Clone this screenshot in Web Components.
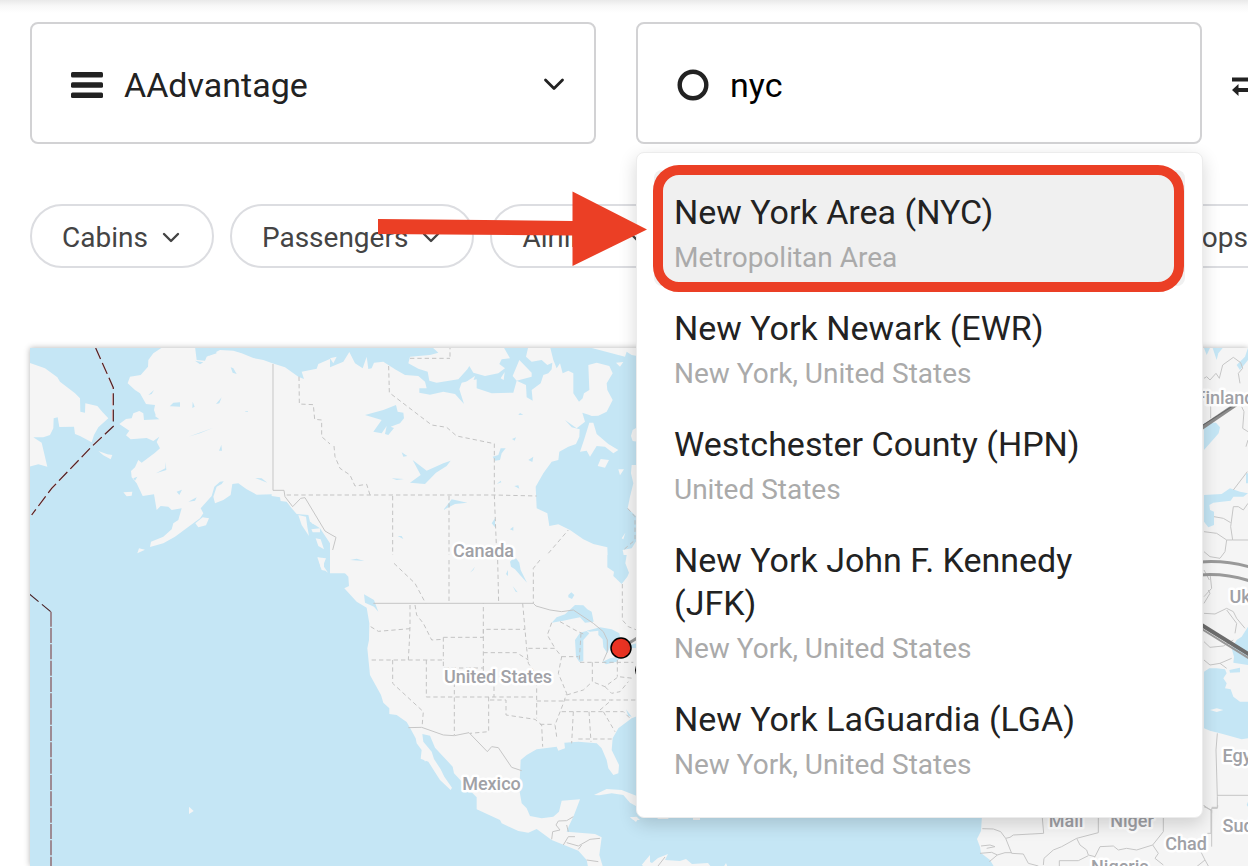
<!DOCTYPE html>
<html lang="en">
<head>
<meta charset="utf-8">
<meta name="viewport" content="width=device-width, initial-scale=1">
<title>Award flight search</title>
<style>
  html, body { height: 100%; margin: 0; }
  body { font-family: Roboto, "Liberation Sans", sans-serif; color: #222; background: #fff; overflow: hidden; }
</style>
</head>
<body>
<flight-search></flight-search>

<script>
const define = (name, html, setup) => {
  const tpl = document.createElement('template');
  tpl.innerHTML = html;
  customElements.define(name, class extends HTMLElement {
    constructor() {
      super();
      this.attachShadow({ mode: 'open' }).append(tpl.content.cloneNode(true));
      if (setup) setup(this, this.shadowRoot);
    }
  });
};

/* Bordered box with a leading icon, a control and an optional trailing icon */
define('search-field', `
  <style>
    :host { display: flex; align-items: center; gap: 19px; box-sizing: border-box; height: 122px; padding: 3px 29px 0 39px;
            border: 2px solid #d2d2d4; border-radius: 8px; background: #fff; position: relative; }
    ::slotted([slot=icon]), ::slotted([slot=end]) { flex: none; pointer-events: none; }
  </style>
  <slot name="icon"></slot><slot></slot><slot name="end"></slot>`);

define('filter-chip', `
  <style>
    :host { display: block; flex: none; }
    button { display: flex; align-items: center; gap: 10px; height: 64px; box-sizing: border-box; padding: 4px 32px 0 30px;
             border: 2px solid #dcdde1; border-radius: 32px; background: #fff; font: 28px/36px Roboto, "Liberation Sans", sans-serif; color: #444; }
    svg { margin-left: 4px; }
  </style>
  <button type="button"><slot></slot>
    <svg width="18" height="12" viewBox="0 0 18 12" fill="none" stroke="#444" stroke-width="2.4" stroke-linecap="round" stroke-linejoin="round" aria-hidden="true"><path d="M2 2l7 7 7-7"/></svg>
  </button>`);

define('place-option', `
  <style>
    :host { display: block; position: relative; padding: 21px 22px 4px 20px; border-radius: 8px; }
    :host([aria-selected=true]) { background: #f0f0f0; }
    .name { font-size: 34px; line-height: 43px; color: #222; }
    .area { font-size: 28px; line-height: 48px; color: #aaa; }
  </style>
  <div class="name"><slot></slot></div>
  <div class="area"><slot name="area"></slot></div>
  <slot name="note"></slot>`);

define('place-menu', `
  <style>
    :host { display: block; position: absolute; z-index: 5; top: calc(100% + 10px); left: -2px; right: -3px; box-sizing: border-box;
            padding: 17px 17px 24px; border: 1px solid #ececec; border-radius: 8px; background: #fff;
            box-shadow: 0 6px 18px rgba(0,0,0,.16); }
  </style>
  <slot></slot>`);

/* Red frame and arrow laid over the option that holds it */
define('red-callout', `
  <style>
    :host { position: absolute; inset: -5px 1px -6px -1px; box-sizing: border-box; border: 10px solid #eb3f25; border-radius: 26px; pointer-events: none; }
    svg { position: absolute; left: -285px; top: 16px; }
  </style>
  <svg width="270" height="76" viewBox="0 0 270 76" aria-hidden="true"><path fill="#eb3f25" d="M0 28L194.500 30V0.500L269 38.500L194.500 75V44.500L0 43Z"/></svg>`);

define('route-map', `
  <style>
    :host { display: block; overflow: hidden; background: #c5e6f5; box-shadow: 0 0 6px rgba(0,0,0,.3); }
    svg { display: block; width: 100%; height: 100%; }
    .land { fill: #f5f5f5; } .water { fill: #c5e6f5; }
    .prov { fill: none; stroke: #c3c3c3; stroke-width: 3; stroke-dasharray: 13 9; }
    .line { fill: none; stroke: #c6c6c6; stroke-width: 3; }
    .date { fill: none; stroke: #f4c9c9; stroke-width: 5; } .date2 { fill: none; stroke: #4a2226; stroke-width: 3.500; }
    .date, .date2 { stroke-dasharray: 36 13; }
    text { font: 500 18px Roboto, "Liberation Sans", sans-serif; fill: #a0a1a6; stroke: #fff; stroke-width: 5px; stroke-linejoin: round; paint-order: stroke; text-anchor: middle; }
  </style>
  <svg viewBox="30 348 1218 518" preserveAspectRatio="xMinYMin slice" role="img" aria-label="Route map">
    <!-- Alaska, Siberia and the north Pacific coast -->
    <g transform="translate(20 340) scale(.33333)">
      <path class="land" d="M430 20L400 40 385 60 384 80 362 105 330 110 323 130 345 150 360 160 378 192 405 195 402 210 408 228 418 222 440 208 460 188 480 187V200L440 198 418 215 405 228 418 238 372 240 370 220 358 213 340 220 335 235 318 237 298 252 328 272 318 286 332 298 380 294 400 303 418 290 410 306 420 325 405 338 365 368 355 360 345 382 333 393 335 412 350 430 368 468 402 463 410 510 422 498 445 500 455 510 485 505 475 540 460 550 455 568 430 590 393 605 390 621 430 610 465 590 540 535 550 520 542 505 575 468 583 440 600 425 611 424 605 432 590 440 580 470 585 490 610 480 632 465 637 432 655 430 680 448 710 464 755 463V468L780 472 782 483 800 485 815 505 830 522 865 525 870 545 890 565 905 590 925 610 945 640 955 690 975 700V60H960L945 50 895 72 890 86 845 95 852 117 835 110 795 82 757 70 730 60 700 54 665 40 640 32 600 30 560 50 555 62 530 60 525 20Z"/>
      <path class="water" d="M545 22L575 28 552 42ZM565 48L585 28 590 40ZM525 62L550 67 540 73ZM632 82L640 85 650 102 638 98ZM385 165L402 150 395 162ZM518 185L524 200 517 204ZM588 192L605 172 598 190ZM505 290L580 263 540 280ZM597 332L604 315 606 332ZM408 400L436 385 437 366 439 390ZM706 414L725 415 742 428ZM470 455L486 449 478 465ZM505 485L530 472 525 482ZM340 415L352 410 345 422ZM676 213h8v2h-8zM820 590V540L855 580 870 545 900 565 930 610 948 690H820Z"/>
      <path class="land" d="M835 525L858 530 862 560 867 588 845 555ZM874 568L900 565V577H878ZM875 550L893 540 888 555ZM887 595L902 598 912 628 895 618ZM892 652L918 655 908 680 915 692 905 690ZM310 457L337 455 335 467 320 469ZM526 550L548 532 567 535 558 556 535 562ZM352 640L357 625 375 629ZM235 333L262 343 277 345 272 358 250 346ZM28 68L75 85 112 112 120 125 165 160 180 175 181 215 195 218 196 190 232 198 248 217 265 235 235 262 222 285 215 307 180 288 165 282 162 260 118 261 113 232 101 235 100 265 90 285 70 292 40 292 65 308 82 380 55 373 28 380Z"/>
      <path class="date" d="M227 24L278 140V242M281 258L215 320 95 445 35 525"/><path class="date2" d="M227 24L280 143V245M281 258L215 320 95 445 35 525"/>
      <path class="line" d="M759 72V451H792L795 470 818 500 842 475 855 473 915 573 947 592 937 630"/>
      <path class="prov" d="M800 465H975M837 110L838 192 880 194 884 238 905 240V290L945 325V350L962 385"/>
    </g>
    <!-- Northern Canada and Hudson Bay -->
    <g transform="translate(330 340) scale(.33333)">
      <path class="land" d="M0 20H925V700H0Z"/>
      <path class="water" d="M0 20H305L325 38 300 45 240 50 235 70 265 86 293 95 298 122 320 128 385 118 412 88 418 78 430 98 465 108 505 100 525 85 508 72 515 58 540 55 520 20H595L588 50 605 65 635 60 652 75 667 68 665 88 655 100 640 105 632 130 605 150 608 182 590 172 588 135 560 122 550 158 485 160 440 145 440 118 395 128 388 148 402 192 375 162 340 155 300 164 268 158 268 145 290 145 285 125 265 108 225 105 195 88 160 65 132 68 125 85 115 87 110 50 98 85 75 70 58 36 40 65 0 82ZM660 20H770L885 50 890 35 905 45 922 48V262L908 270 903 288 908 303 922 305V375L905 375 903 400 910 430 900 470 893 505 922 532V598L905 625 878 630 892 700H835L832 622 790 612 760 598 720 570 685 553 658 558 652 520 620 505 617 440 640 400 665 365 685 360 688 335 715 320 738 312 748 290 749 268 725 262 705 240 740 265 765 245 757 218 778 225 785 228 805 227 830 215 848 180 832 150 830 130 848 100 838 78 800 68 775 75 778 150 762 160 758 175 747 185 730 160 730 100 715 92 698 100 690 70 680 85 670 60ZM105 225L160 210 198 195 203 215 220 218 222 235 210 250 182 260 192 264 175 285 165 282 170 258 155 280 130 275 155 240ZM248 360L290 392 340 370 362 362 350 378 318 398 285 432 240 428 272 405ZM215 337L232 348 220 350ZM185 415L222 417 200 420ZM340 510L365 478 412 488 375 492ZM488 350L505 345 512 325 527 325 515 340 510 360 495 362ZM595 360L610 350 607 366ZM565 225L570 219 580 224ZM546 297L558 292 554 302ZM500 432L512 422 514 427ZM553 438L565 436 568 446ZM540 568L550 560 550 572ZM485 550L495 535V562ZM203 588L215 588 220 597ZM60 661L80 658 102 662ZM548 668L566 660 575 700 550 695ZM425 688L434 680 434 687Z"/>
      <path class="land" d="M568 60L605 98V110L560 122 548 108ZM512 115L524 96 521 120ZM778 248L790 248 800 282 835 312 865 330 850 340 825 320 800 318 780 350 770 332 750 335 762 300ZM812 357L837 360 825 383 803 378ZM865 388L882 388 870 406ZM0 55L20 50 10 70ZM875 595L886 578 880 598ZM430 85L445 70 460 80ZM858 68L880 66 870 80ZM837 683L848 680 855 690H837ZM395 135L420 118 435 108 428 128 410 146Z"/>
      <path class="prov" d="M0 465H495L620 468M240 55H360M360 50V24M176 78L178 158 305 255 350 262 380 288 493 311V465L502 690M357 468V700M188 468V655L212 690M12 318L15 350 30 385 60 405 75 438 110 433 120 465M612 690L715 570M893 505L915 530V600L880 630"/>
      <path class="line" d="M0 582L18 592 8 630" />
    </g>
    <!-- United States, Mexico and Central America -->
    <g transform="translate(250 560) scale(.33333)">
      <path class="land" d="M254 -15L262 15 295 50 297 78 283 85 320 125 350 143 358 190 357 240 352 265 360 345 393 405 400 428 418 445V462L440 465 470 486 480 503 497 535 500 550 515 570 512 596 535 605 557 640 570 660 602 690 606 683 583 650 572 628 552 597 545 575 520 545 517 522 540 527 555 563 608 620 612 640 640 670 668 700 680 712V748L750 780 755 790 805 813 835 818 860 807 905 840 985 872 1010 900 1015 925H1060L1048 885 1055 832 1035 822 950 815 958 795 970 770 980 745 990 718 935 722 927 755 910 770 875 775 840 768 830 745 815 730 808 690 812 600 830 585 860 568 920 560 925 572 945 565 943 548 985 545 1040 550 1055 565 1070 600 1075 625 1090 645 1105 640 1107 615 1085 570 1088 535 1105 505 1145 475 1170 465V-15Z"/>
      <path class="water" d="M342 103L372 120 385 155 372 140 345 128ZM905 188L920 172 945 163 975 135 1000 136 1012 148 1025 155 1031 185 1005 188 990 172 960 178 940 182ZM975 240L990 218 1010 213 1018 220 1000 240V280L1000 303 988 306 978 290ZM1010 212L1050 202 1085 208 1108 220 1112 240 1090 240 1072 280 1060 262 1058 238 1045 225 1045 212 1020 215ZM1058 305L1080 295 1115 288 1100 305 1068 313ZM1140 255L1160 250V264H1140ZM1072 -15V22L1092 35 1090 48 1115 72 1132 50 1137 38 1126 10 1130 -15ZM780 5L795 -10 808 8 812 30 831 68 810 45 795 28 783 20ZM955 105L964 97 973 105 966 117 955 112ZM788 78L803 97 797 95ZM768 42L774 30V48ZM660 38L675 20 670 30ZM300 0L320 -4 343 3ZM1128 448L1145 470 1135 468Z"/>
      <path class="land" d="M205 -8L222 5 222 20 234 38 212 22ZM1032 705L1070 687 1115 690 1170 712V745L1140 728 1120 705 1085 700 1048 706ZM1140 772L1160 770 1170 780H1150ZM1175 915L1200 885V918ZM520 590L530 598 525 605Z"/>
      <path class="line" d="M370 130H850L858 138 900 150 935 155 970 150 1030 190 1060 215 1072 240 1072 275 1060 302M475 503L515 502 580 525 613 527 657 518 712 575 725 560 745 563 785 622 815 632M905 838L908 815 930 810 918 795 925 783 950 782 970 770M950 795L955 815M940 855L955 830 975 830M950 848L985 858 1020 838 1050 835M985 868L995 855M1010 900L1045 905"/>
      <path class="prov" d="M432 10L495 70 527 130M597 0V130M743 0L746 130M870 0L850 25V130M480 135L480 200 478 245 475 300M362 200L385 214 480 206M495 135L500 165 520 190 545 240 580 238M580 232H700V130M580 232V300M365 300H580V324H700V208H825M818 130L830 265 835 310 860 345V475M700 278H800L835 300M428 300V370L520 455 516 502M529 300V411H860M613 324V525M700 324V347H732V411M716 411V515L660 520M720 420H768V465L855 478 875 495 878 560M835 265H915L935 290 925 340 950 400 940 430 915 495 920 530M905 188L892 225 915 265M860 423H945M935 290H985M993 220L988 300M990 307H1150M1027 307V365L1065 380 1105 350 1150 355M950 405L1000 390 1027 365M945 420H1160M935 455H1120L1140 475M970 455L965 550M1017 455L1023 545M985 537H1085M1060 455L1095 515M1050 450L1085 420M870 493H915M1065 380L1085 400 1110 395 1135 365M1102 300V350M930 185L975 210 1000 222M1117 72V180L1135 200 1160 210"/>
    </g>
    <!-- International date line over the Pacific -->
    <g transform="translate(20 560) scale(.33333)">
      <path class="date2" d="M28 102L92 155"/><path d="M93 155V930" fill="none" stroke="#957a80" stroke-width="5" stroke-dasharray="45 4"/>
      <path class="land" d="M507 740L521 753 507 762Z"/>
    </g>
    <!-- South America and Caribbean -->
    <path class="land" d="M641 868L646 860 652 863 658 858 668 854 665 860 680 861 686 859 692 864 708 863 712 868ZM723 868L726 863 728 868ZM630 817L638 819 636 822ZM655 815h16l-3 4h-10zM693 817h7v3h-7z"/>
    <path d="M658 866L665 857" stroke="#c6c6c6" fill="none"/>
    <!-- Africa -->
    <path class="land" d="M983 800H1260V870H996L990 860 981 853 980 847 977 839 981 831Z"/>
    <g transform="translate(970 790) scale(.33333)">
      <path class="line" d="M217 84L221 130 130 135 120 142 107 145 92 125 70 117 37 116M107 145L125 190 160 192 175 220 205 228M30 190L65 187 82 195 105 188H125M33 168L60 165 75 170 50 175M82 195L58 215M385 84V128L320 145 275 170 250 180 222 205 220 225M320 145L330 165 350 180 355 195 375 200 390 170 430 168 445 180 470 175 500 180 548 165 580 125V84M548 165L565 190 555 205 580 225M375 200L365 225M268 230V212H325L355 197M700 45L723 62V130H712M743 0V52H725M743 16H834M690 180L705 210 680 230M705 210L715 228"/>
    </g>
    <!-- Europe and the eastern Mediterranean -->
    <path class="land" d="M1195 340H1260V805H1195Z"/>
    <g transform="translate(1190 340) scale(.33333)">
      <path class="water" d="M42 24H60L50 45ZM68 24H98L85 40 80 60ZM140 75L165 50 174 24V60L150 90ZM42 248H78L90 262 86 280 42 330ZM42 465L95 462 120 445 150 455 174 460 160 470 130 470 122 482 95 485 70 488 58 495 60 510 72 515V555L55 562 42 545ZM168 400H174V430H168Z"/>
      <path class="line" d="M42 115L50 110 60 120 78 100 88 115 98 75 130 52 152 68 158 85 145 100 150 130M62 195V235M155 200L162 215 158 265 174 275M168 320L174 300M172 395L130 450M130 500L145 500 160 510 174 490M130 500L122 560 128 600M42 575L80 580 110 600 128 600 174 600M110 600L105 635 90 655 60 650 42 635M72 530L100 535 122 548M42 690L58 720M42 770L65 745 60 700"/>
    </g>
    <g transform="translate(1190 590) scale(.33333)">
      <path class="water" d="M174 110L155 140 140 150 125 175 132 200 130 218 174 225ZM42 245L58 235 80 235 105 238 110 250 100 265 110 280 105 295 122 298 130 320 150 335 174 335V445L155 448 120 438 90 430 60 422 42 415ZM118 240L150 233V247L120 248ZM170 645L174 635V650Z"/>
      <path class="land" d="M60 360L80 355 100 360 80 366Z"/>
      <path class="line" d="M42 70L75 72 110 55 130 65 140 85 165 115M135 130L140 100 110 60M42 155L60 172 100 168 130 150M42 210L60 225 90 220 125 205M90 220L110 235M42 40L60 10 55 0M82 430L78 480 82 620V655H65V670M82 616H174M42 650L65 660V770"/>
    </g>
    <!-- Flight routes -->
    <g fill="none">
      <path d="M1200 429L1250 395" stroke="#8b8b8b" stroke-width="4"/><path d="M1200 427L1250 395" stroke="#666" stroke-width="1"/>
      <path d="M1200 562Q1225 560 1250 567M1200 575Q1225 573 1250 581" stroke="#999" stroke-width="3"/>
      <path d="M1200 624L1250 655" stroke="#6c6c6c" stroke-width="4"/><path d="M1200 628L1250 659" stroke="#999" stroke-width="2"/>
      <path d="M621 648L642 635" stroke="#999" stroke-width="3"/>
    </g>
    <circle cx="645" cy="670" r="10"/>
    <circle cx="621" cy="648" r="10" fill="#ea3323" stroke="#000" stroke-width="1.500"/>
    <text x="483.500" y="557">Canada</text><text x="498" y="683">United States</text><text x="491.500" y="790">Mexico</text>
    <text x="1225" y="404">Finland</text><text x="1260" y="603">Ukraine</text><text x="1245" y="762">Egypt</text><text x="1248" y="832">Sudan</text>
    <text x="1066" y="827">Mali</text><text x="1132" y="827">Niger</text><text x="1186" y="850">Chad</text><text x="1120" y="873">Nigeria</text>
  </svg>`);

define('flight-search', `
  <style>
    :host { display: flex; flex-direction: column; box-sizing: border-box; height: 100vh; padding: 22px 0 0 30px; overflow: hidden;
            background: linear-gradient(#e9e9e9, #f8f8f8 6px, #fff 13px) no-repeat #fff; }
    .fields { display: grid; grid-template-columns: repeat(2, calc((100vw - 116px) / 2)) auto; column-gap: 40px; }
    .swap { display: flex; align-items: center; margin-left: -10px; padding: 4px 0 0; border: 0; background: none; width: 32px; }
    select, input { flex: 1; min-width: 0; height: 60px; padding: 0; border: 0; outline: 0; background: transparent; appearance: none;
                    font: 34px/44px Roboto, "Liberation Sans", sans-serif; color: #222; }
    input { color: #000; }
    .filters { display: flex; gap: 16px; margin: 60px -66px 0 0; }
    .filters :last-child { margin-left: auto; }
    route-map { flex: 1; min-height: 0; margin-top: 80px; }
    .wide { margin-right: 2px; }
  </style>
  <div class="fields">
    <search-field>
      <svg slot="icon" class="wide" width="32" height="28" viewBox="0 0 32 28" fill="#222" aria-hidden="true"><rect y="1" width="32" height="5.500" rx="1.500"/><rect y="11.200" width="32" height="5.500" rx="1.500"/><rect y="21.500" width="32" height="5.500" rx="1.500"/></svg>
      <select aria-label="Loyalty program"><option>AAdvantage</option></select>
      <svg slot="end" width="22" height="14" viewBox="0 0 22 14" fill="none" stroke="#222" stroke-width="2.800" stroke-linecap="round" stroke-linejoin="round" aria-hidden="true"><path d="M2.500 2l8.500 8.500L19.500 2"/></svg>
    </search-field>
    <search-field>
      <svg slot="icon" class="wide" width="32" height="32" viewBox="0 0 32 32" aria-hidden="true"><circle cx="16" cy="16" r="13.300" fill="none" stroke="#222" stroke-width="4.400"/></svg>
      <input type="text" aria-label="Origin" value="nyc">
      <place-menu role="listbox" aria-label="Places">
        <place-option role="option" aria-selected="true">New York Area (NYC)<span slot="area">Metropolitan Area</span><red-callout slot="note"></red-callout></place-option>
        <place-option role="option">New York Newark (EWR)<span slot="area">New York, United States</span></place-option>
        <place-option role="option">Westchester County (HPN)<span slot="area">United States</span></place-option>
        <place-option role="option">New York John F. Kennedy (JFK)<span slot="area">New York, United States</span></place-option>
        <place-option role="option">New York LaGuardia (LGA)<span slot="area">New York, United States</span></place-option>
      </place-menu>
    </search-field>
    <button class="swap" type="button" aria-label="Swap origin and destination">
      <svg width="32" height="24" viewBox="0 0 32 24" fill="#222" aria-hidden="true"><path d="M0 4.500H26V0.500L32 6.500 26 12.500V8.500H0ZM32 19H6.500V23L0 17 6.500 11V15H32Z"/></svg>
    </button>
  </div>
  <div class="filters">
    <filter-chip>Cabins</filter-chip>
    <filter-chip>Passengers</filter-chip>
    <filter-chip>Airlines</filter-chip>
    <filter-chip>Stops</filter-chip>
  </div>
  <route-map></route-map>`);
</script>
</body>
</html>
